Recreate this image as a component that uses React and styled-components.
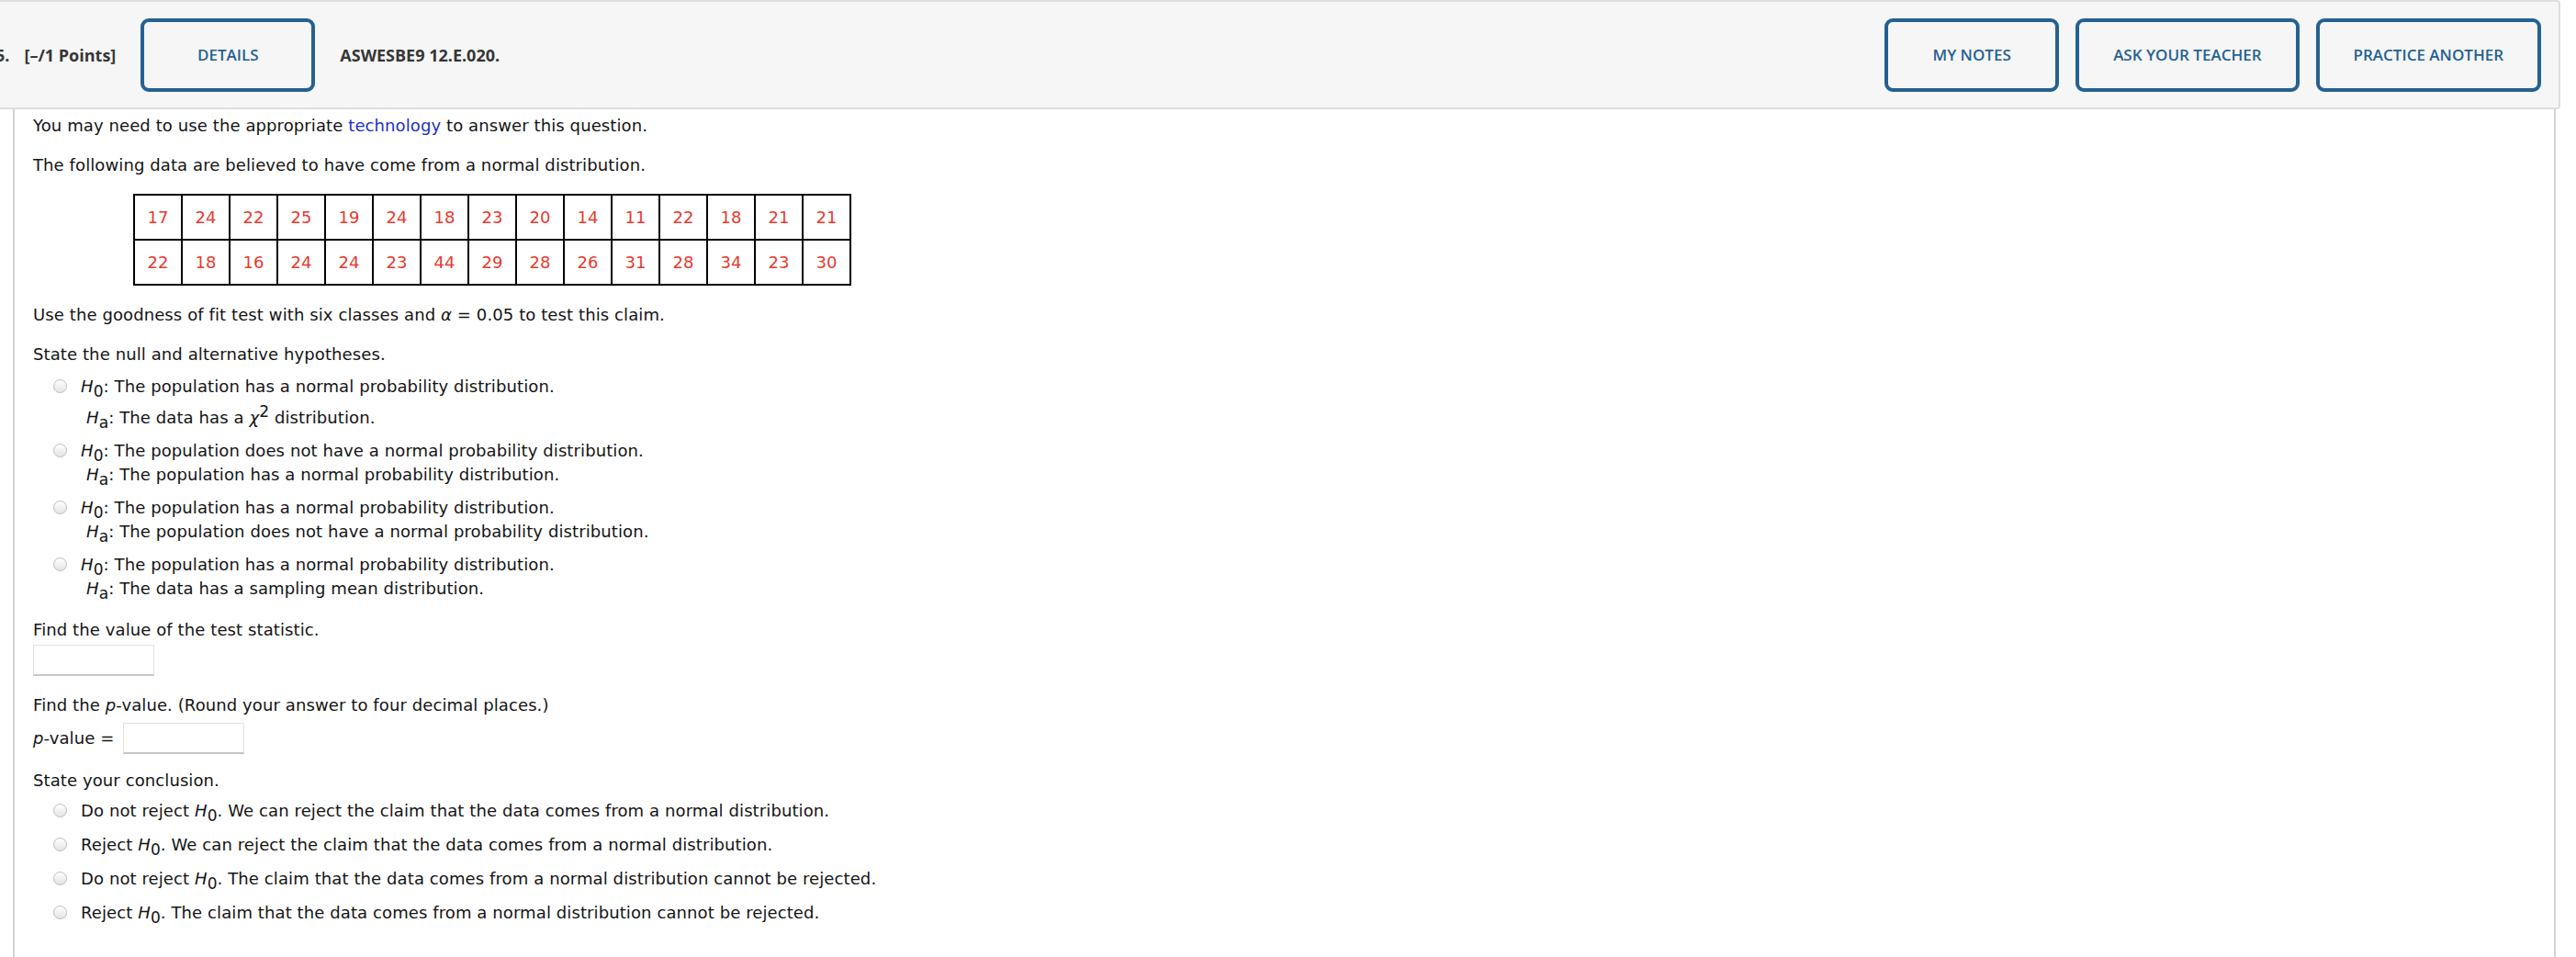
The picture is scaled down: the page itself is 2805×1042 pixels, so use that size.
import React from "react";
import styled, { createGlobalStyle } from "styled-components";

const GlobalStyle = createGlobalStyle`
  body {
    margin: 0;
    background: #ffffff;
    font-family: "DejaVu Sans", Verdana, sans-serif;
    color: #141414;
  }
`;

const Page = styled.div`
  width: 2805px;
  overflow: hidden;
`;

const Header = styled.div`
  display: flex;
  align-items: center;
  width: 2786px;
  height: 115px;
  box-sizing: content-box;
  background: #f6f6f6;
  border: 2px solid #dedede;
  border-left: none;
  border-radius: 0 4px 4px 0;
  font-family: "Open Sans", sans-serif;
`;

const LeftGroup = styled.div`
  display: flex;
  align-items: center;
  gap: 27px;
`;

const RightGroup = styled.div`
  display: flex;
  align-items: center;
  gap: 18px;
  margin-left: auto;
  padding-right: 19px;
`;

const QNum = styled.span`
  font-size: 18px;
  font-weight: 700;
  color: #3a3a3a;
  margin-left: -5px;
  margin-right: -11px;
`;

const HeadText = styled.span`
  font-size: 18px;
  font-weight: 700;
  color: #363636;
`;

const OutlineButton = styled.button`
  height: 80px;
  min-width: 190px;
  padding: 0 37px;
  box-sizing: border-box;
  background: transparent;
  border: 4px solid #256192;
  border-radius: 9px;
  color: #256192;
  font-family: "Open Sans", sans-serif;
  font-size: 17px;
  font-weight: 600;
  text-transform: uppercase;
`;

const Content = styled.div`
  margin-left: 14px;
  width: 2769px;
  min-height: 923px;
  border-left: 2px solid #d4d4d4;
  border-right: 2px solid #d4d4d4;
  padding: 8px 0 0 20px;
  box-sizing: border-box;
  font-size: 18px;
  line-height: 20px;
  letter-spacing: 0.1px;
`;

const Para = styled.p`
  margin: ${(p) => p.$top ?? 23}px 0 0 0;
`;

const Link = styled.span`
  color: #1e2fc4;
`;

const DataTable = styled.table`
  margin: 21px 0 0 109px;
  border-collapse: collapse;
  border: 2px solid #000;
`;

const Cell = styled.td`
  width: 50px;
  height: 47px;
  padding: 0;
  border: 2px solid #000;
  text-align: center;
  color: #e8392f;
`;

const OptionList = styled.div`
  display: flex;
  flex-direction: column;
  gap: ${(p) => p.$gap}px;
  margin-top: ${(p) => p.$top}px;
`;

const OptionRow = styled.div`
  display: flex;
  align-items: flex-start;
  line-height: 26px;
`;

const Radio = styled.span`
  flex: none;
  width: 15px;
  height: 15px;
  margin: 5px 15px 0 22px;
  border-radius: 50%;
  border: 1px solid #bdbdbd;
  box-sizing: border-box;
  background: linear-gradient(#ffffff, #e4e4e4);
`;

const Lines = styled.div`
  display: flex;
  flex-direction: column;
`;

const AltLine = styled.div`
  margin-left: 6px;
  margin-top: ${(p) => p.$extra || 0}px;
`;

const Var = styled.i`
  font-style: italic;
`;

const Sub = styled.sub`
  font-size: 17px;
  vertical-align: -5px;
  line-height: 0;
`;

const Sup = styled.sup`
  font-size: 17px;
  vertical-align: 7px;
  line-height: 0;
`;

const AnswerBox = styled.input`
  display: block;
  width: 132px;
  height: 34px;
  box-sizing: border-box;
  margin-top: ${(p) => p.$top || 0}px;
  border: 1px solid #e2e2e2;
  border-bottom: 2px solid #c6c6c6;
  background: #fff;
`;

const InlineRow = styled.div`
  display: flex;
  align-items: center;
  gap: 10px;
  margin-top: 9px;
`;

const H0 = () => (
  <>
    <Var>H</Var>
    <Sub>0</Sub>
  </>
);

const Ha = () => (
  <>
    <Var>H</Var>
    <Sub>a</Sub>
  </>
);

const row1 = [17, 24, 22, 25, 19, 24, 18, 23, 20, 14, 11, 22, 18, 21, 21];
const row2 = [22, 18, 16, 24, 24, 23, 44, 29, 28, 26, 31, 28, 34, 23, 30];

const hypotheses = [
  [
    "The population has a normal probability distribution.",
    <>The data has a <Var>χ</Var><Sup>2</Sup> distribution.</>,
  ],
  [
    "The population does not have a normal probability distribution.",
    "The population has a normal probability distribution.",
  ],
  [
    "The population has a normal probability distribution.",
    "The population does not have a normal probability distribution.",
  ],
  [
    "The population has a normal probability distribution.",
    "The data has a sampling mean distribution.",
  ],
];

const conclusions = [
  ["Do not reject", "We can reject the claim that the data comes from a normal distribution."],
  ["Reject", "We can reject the claim that the data comes from a normal distribution."],
  ["Do not reject", "The claim that the data comes from a normal distribution cannot be rejected."],
  ["Reject", "The claim that the data comes from a normal distribution cannot be rejected."],
];

export default function App() {
  return (
    <Page>
      <GlobalStyle />
      <Header>
        <LeftGroup>
          <QNum>5.</QNum>
          <HeadText>[–/1 Points]</HeadText>
          <OutlineButton>Details</OutlineButton>
          <HeadText>ASWESBE9 12.E.020.</HeadText>
        </LeftGroup>
        <RightGroup>
          <OutlineButton>My Notes</OutlineButton>
          <OutlineButton>Ask Your Teacher</OutlineButton>
          <OutlineButton>Practice Another</OutlineButton>
        </RightGroup>
      </Header>

      <Content>
        <Para $top={0}>
          You may need to use the appropriate <Link>technology</Link> to answer this question.
        </Para>
        <Para>The following data are believed to have come from a normal distribution.</Para>

        <DataTable>
          <tbody>
            {[row1, row2].map((row, i) => (
              <tr key={i}>
                {row.map((v, j) => (
                  <Cell key={j}>{v}</Cell>
                ))}
              </tr>
            ))}
          </tbody>
        </DataTable>

        <Para $top={22}>
          Use the goodness of fit test with six classes and <Var>α</Var> = 0.05 to test this claim.
        </Para>
        <Para>State the null and alternative hypotheses.</Para>

        <OptionList $top={12} $gap={10}>
          {hypotheses.map(([h0, ha], i) => (
            <OptionRow key={i}>
              <Radio />
              <Lines>
                <div>
                  <H0 />: {h0}
                </div>
                <AltLine $extra={i === 0 ? 8 : 0}>
                  <Ha />: {ha}
                </AltLine>
              </Lines>
            </OptionRow>
          ))}
        </OptionList>

        <Para $top={22}>Find the value of the test statistic.</Para>
        <AnswerBox $top={6} />

        <Para $top={22}>
          Find the <Var>p</Var>-value. (Round your answer to four decimal places.)
        </Para>
        <InlineRow>
          <span>
            <Var>p</Var>-value =
          </span>
          <AnswerBox />
        </InlineRow>

        <Para $top={19}>State your conclusion.</Para>
        <OptionList $top={10} $gap={11}>
          {conclusions.map(([verb, rest], i) => (
            <OptionRow key={i}>
              <Radio />
              <div>
                {verb} <H0 />. {rest}
              </div>
            </OptionRow>
          ))}
        </OptionList>
      </Content>
    </Page>
  );
}
